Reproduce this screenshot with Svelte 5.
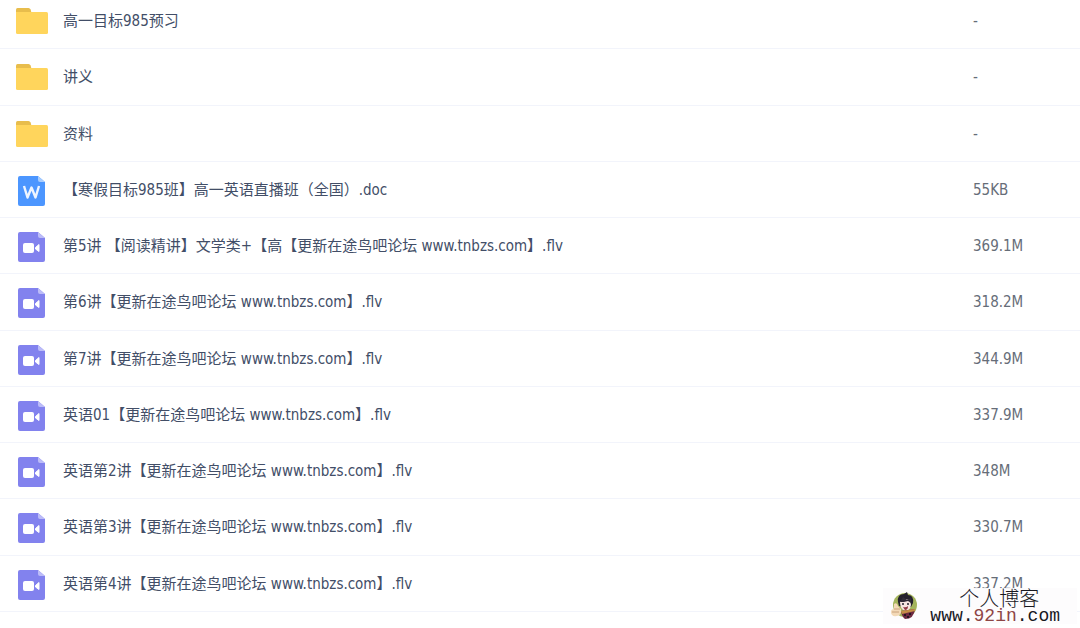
<script lang="ts">
	type FileKind = 'folder' | 'doc' | 'video';

	interface FileEntry {
		name: string;
		kind: FileKind;
		size: string;
	}

	const files: FileEntry[] = [
		{ name: '高一目标985预习', kind: 'folder', size: '-' },
		{ name: '讲义', kind: 'folder', size: '-' },
		{ name: '资料', kind: 'folder', size: '-' },
		{ name: '【寒假目标985班】高一英语直播班（全国）.doc', kind: 'doc', size: '55KB' },
		{ name: '第5讲 【阅读精讲】文学类+【高【更新在途鸟吧论坛 www.tnbzs.com】.flv', kind: 'video', size: '369.1M' },
		{ name: '第6讲【更新在途鸟吧论坛 www.tnbzs.com】.flv', kind: 'video', size: '318.2M' },
		{ name: '第7讲【更新在途鸟吧论坛 www.tnbzs.com】.flv', kind: 'video', size: '344.9M' },
		{ name: '英语01【更新在途鸟吧论坛 www.tnbzs.com】.flv', kind: 'video', size: '337.9M' },
		{ name: '英语第2讲【更新在途鸟吧论坛 www.tnbzs.com】.flv', kind: 'video', size: '348M' },
		{ name: '英语第3讲【更新在途鸟吧论坛 www.tnbzs.com】.flv', kind: 'video', size: '330.7M' },
		{ name: '英语第4讲【更新在途鸟吧论坛 www.tnbzs.com】.flv', kind: 'video', size: '337.2M' }
	];
</script>

{#snippet icon(kind: FileKind)}
	<svg class="icon" viewBox="0 0 32 32" aria-hidden="true">
		{#if kind === 'folder'}
			<path d="M0 7V3.5Q0 2 1.5 2H12.5Q14 2 14.6 3.5L15.5 7Z" fill="#e8bd4c" />
			<path d="M0 6H30.5Q32 6 32 7.5V26.5Q32 28 30.5 28H1.5Q0 28 0 26.5Z" fill="#ffd55c" />
		{:else}
			<path
				d="M4 1H22L29 7V29Q29 31 27 31H4Q2 31 2 29V3Q2 1 4 1Z"
				fill={kind === 'doc' ? '#4c96ff' : '#8282ee'}
			/>
			<path d="M22 1L29 7H24Q22 7 22 5Z" fill={kind === 'doc' ? '#a8cdff' : '#bcbcf8'} />
			{#if kind === 'doc'}
				<path
					d="M8 11L11.5 22.5L15.5 12.5L19.5 22.5L23 11"
					fill="none"
					stroke="#eef5ff"
					stroke-width="2.4"
					stroke-linejoin="round"
				/>
			{:else}
				<rect x="7" y="12" width="11" height="10" rx="2" fill="#fff" />
				<path d="M19.5 16.5L23 13.5V20.5L19.5 18Z" fill="#fff" stroke="#fff" stroke-linejoin="round" />
			{/if}
		{/if}
	</svg>
{/snippet}

<main>
	<table class="files">
		<tbody>
			{#each files as file}
				<tr>
					<td class="name">
						<a href="#file">
							{@render icon(file.kind)}
							<span>{file.name}</span>
						</a>
					</td>
					<td class="size">{file.size}</td>
				</tr>
			{/each}
		</tbody>
	</table>

	<aside class="badge">
		<svg class="avatar" viewBox="0 0 28 30" aria-hidden="true">
			<circle cx="15" cy="14" r="12" fill="#a4b45c" />
			<path d="M8 11Q7 3 14 3L17 1L18 4Q24 4 23 12L21 16L9 15Z" fill="#25202d" />
			<path d="M10 11L14 8L20 9L21 14Q20 20 15 20Q10 18 10 11Z" fill="#f7e6e3" />
			<path d="M10 11L13 6L17 9L21 7V12L18 10L14 11Z" fill="#302b38" />
			<circle cx="13" cy="13" r="1" fill="#25202d" />
			<circle cx="18" cy="13" r="1" fill="#25202d" />
			<path d="M13 16Q16 17 18 15Q18 19 15 19Z" fill="#943c48" />
			<path d="M11 20L25 18Q24 28 15 28Q12 26 11 20Z" fill="#6d2940" />
			<path d="M11 20L25 18V20L12 23Z" fill="#c58d45" />
			<path d="M14 24H16M19 23H21M17 26H19" stroke="#251621" stroke-width="2" />
			<path d="M4 13Q7 11 8 15L11 18Q12 24 7 25Q1 26 1 21Q1 18 4 18Z" fill="#f3d9b7" />
			<path d="M2 21H9M4 18H10" stroke="#c9a27d" />
		</svg>
		<div class="label">
			<span class="title">个人博客</span>
			<span class="site">www.<em>92in</em>.com</span>
		</div>
	</aside>
</main>

<style>
	:global(body) {
		margin: 0;
		background: #fff;
		overflow: hidden;
	}

	main {
		position: relative;
		min-height: 100vh;
		display: flow-root;
		font-family: 'DejaVu Sans Condensed', 'Noto Sans CJK SC', sans-serif;
		font-size: 15px;
		line-height: 20px;
		text-spacing-trim: space-all;
	}

	/* the list is scrolled a little past its first row */
	.files {
		width: 100%;
		margin-top: -7px;
		border-spacing: 0;
		table-layout: fixed;
	}

	td {
		box-sizing: border-box;
		height: 56px;
		padding: 2px 0 0;
		border-bottom: 1px solid #f2f4fb;
		vertical-align: middle;
	}

	tr:nth-child(4n + 2) td {
		height: 57px;
	}

	.name a {
		display: flex;
		align-items: center;
		gap: 15px;
		padding-left: 16px;
		color: #424e67;
		text-decoration: none;
	}

	.name span {
		padding-bottom: 2px;
		white-space: nowrap;
	}

	.icon {
		flex: none;
		width: 32px;
		height: 32px;
	}

	.size {
		width: 107px;
		padding-bottom: 2px;
		color: #666d78;
	}

	.badge {
		position: absolute;
		right: 3px;
		bottom: 4px;
		display: flex;
		align-items: center;
		gap: 12px;
		padding: 0 17px 0 7px;
		background: rgb(253 252 253 / 0.95);
		color: #18181f;
	}

	.avatar {
		width: 28px;
		height: 30px;
	}

	.label {
		display: flex;
		flex-direction: column;
		align-items: center;
		font-family: 'Liberation Mono', monospace;
		font-size: 18px;
		line-height: 16px;
	}

	.title {
		padding-left: 8px;
		font-family: 'Noto Sans CJK SC', sans-serif;
		font-size: 20px;
		font-weight: 300;
		line-height: 20px;
	}

	.site em {
		color: #8e4545;
		font-style: normal;
	}
</style>
